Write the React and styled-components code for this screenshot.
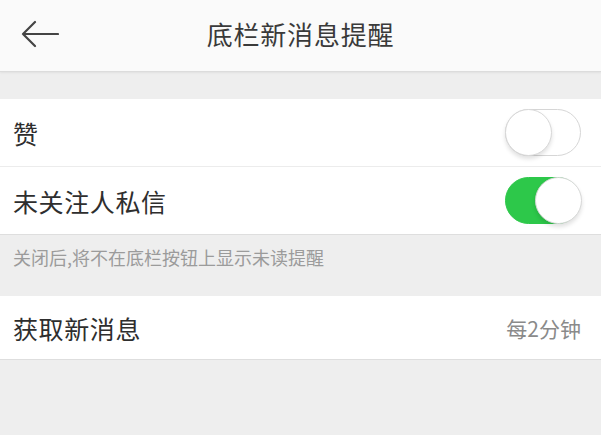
import React, { useState } from "react";
import styled, { createGlobalStyle } from "styled-components";

const Global = createGlobalStyle`
  html, body { margin: 0; padding: 0; }
  body {
    width: 601px;
    height: 435px;
    overflow: hidden;
    background: #eeeeee;
    font-family: "Noto Sans CJK SC", "Noto Sans", sans-serif;
  }
`;

const Page = styled.div`
  width: 601px;
  height: 435px;
  background: #eeeeee;
  display: flex;
  flex-direction: column;
`;

const Header = styled.header`
  height: 72px;
  box-sizing: border-box;
  padding-bottom: 5px;
  background: #fafafa;
  border-bottom: 1px solid #dcdcdc;
  box-shadow: 0 1px 2px rgba(0, 0, 0, 0.06);
  display: flex;
  align-items: center;
  justify-content: center;
  position: relative;
  flex-shrink: 0;
`;

const BackButton = styled.button`
  position: absolute;
  left: 18px;
  top: 17px;
  width: 44px;
  height: 34px;
  border: none;
  background: transparent;
  padding: 0;
  display: flex;
  align-items: center;
  justify-content: center;
`;

const Title = styled.h1`
  margin: 0;
  font-size: 26px;
  font-weight: 400;
  color: #3a3a3a;
  letter-spacing: 0.8px;
`;

const Group = styled.section`
  background: #ffffff;
  margin-top: ${(p) => p.$gap}px;
  border-bottom: 1px solid #dedede;
`;

const Row = styled.div`
  height: ${(p) => p.$h}px;
  display: flex;
  align-items: center;
  justify-content: space-between;
  padding: 0 20px 0 13px;
  border-top: ${(p) => (p.$divider ? "1px solid #ececec" : "none")};
`;

const Label = styled.span`
  font-size: 25px;
  color: #2e2e2e;
  letter-spacing: 0.6px;
`;

const Value = styled.span`
  font-size: 21px;
  color: #8a8a8a;
`;

const Hint = styled.p`
  margin: 0;
  padding: 9px 13px 0;
  height: 61px;
  box-sizing: border-box;
  font-size: 18px;
  color: #9b9b9b;
`;

const Track = styled.button`
  position: relative;
  width: 76px;
  height: 47px;
  border-radius: 24px;
  padding: 0;
  border: 1px solid ${(p) => (p.$on ? "#2dc84a" : "#d6d6d6")};
  background: ${(p) => (p.$on ? "#2dc84a" : "#ffffff")};
  cursor: pointer;
  box-sizing: border-box;
`;

const Knob = styled.span`
  position: absolute;
  top: -1px;
  left: ${(p) => (p.$on ? "29px" : "-1px")};
  width: 47px;
  height: 47px;
  border-radius: 50%;
  background: #ffffff;
  box-sizing: border-box;
  border: 1px solid #d8d8d8;
  box-shadow: 0 3px 4px rgba(0, 0, 0, 0.12);
`;

function Toggle({ on, onChange }) {
  return (
    <Track $on={on} onClick={() => onChange(!on)} aria-pressed={on}>
      <Knob $on={on} />
    </Track>
  );
}

export default function App() {
  const [like, setLike] = useState(false);
  const [dm, setDm] = useState(true);
  return (
    <>
      <Global />
      <Page>
        <Header>
          <BackButton aria-label="返回">
            <svg width="38" height="30" viewBox="0 0 38 30" fill="none">
              <path
                d="M2 15 H37 M14 3 L2 15 L14 27"
                stroke="#444"
                strokeWidth="2.2"
                strokeLinecap="round"
                strokeLinejoin="round"
              />
            </svg>
          </BackButton>
          <Title>底栏新消息提醒</Title>
        </Header>
        <Group $gap={27}>
          <Row $h={67}>
            <Label>赞</Label>
            <Toggle on={like} onChange={setLike} />
          </Row>
          <Row $h={67} $divider>
            <Label>未关注人私信</Label>
            <Toggle on={dm} onChange={setDm} />
          </Row>
        </Group>
        <Hint>关闭后,将不在底栏按钮上显示未读提醒</Hint>
        <Group $gap={0}>
          <Row $h={63}>
            <Label>获取新消息</Label>
            <Value>每2分钟</Value>
          </Row>
        </Group>
      </Page>
    </>
  );
}
